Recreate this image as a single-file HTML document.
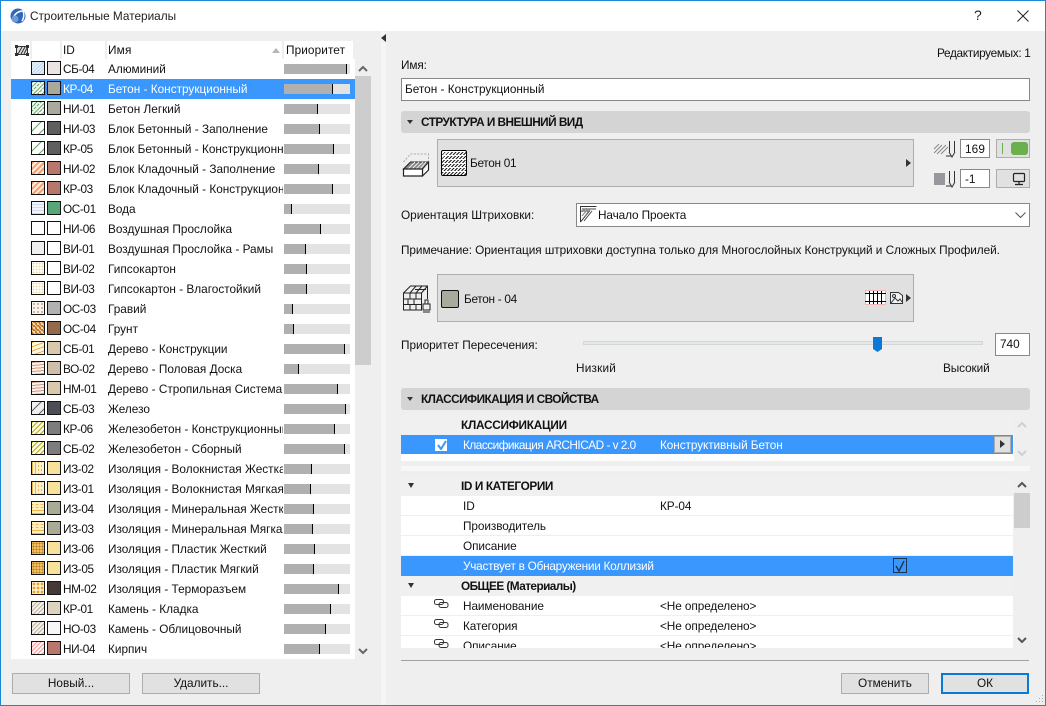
<!DOCTYPE html>
<html lang="ru"><head><meta charset="utf-8"><title>Строительные Материалы</title>
<style>
html,body{margin:0;padding:0;background:#efefef}
#w{position:relative;width:1046px;height:706px;overflow:hidden;background:#efefef;font:11.8px/20px "Liberation Sans",sans-serif;color:#111}
#w div,#w span{position:absolute;box-sizing:border-box;white-space:nowrap}
.bd{left:0;top:0;width:1046px;height:706px;border:1px solid #1a86d8;z-index:9;pointer-events:none}
.r{left:11px;width:344px;height:20px;background:#fff}
.r.s{background:#3a97fe;color:#fff}
.h,.c{top:2px;width:14px;height:14px;border:1px solid #111}
.h{left:20px}.c{left:36px}
.i{left:52px;top:0;letter-spacing:-.4px}
.n{left:97px;top:0;width:175px;overflow:hidden;letter-spacing:0}
.b{left:273px;top:5px;width:66px;height:10px;background:#e3e3e3}
.b span{left:0;top:0;height:10px;background:#b0b0b0;border-right:1px solid #000}
.a{background:repeating-linear-gradient(135deg,#bcd6f5 0 1px,#e6f0fb 1px 2.500px)}
.g{background:radial-gradient(#f2f7f2 30%,transparent 35%) 0 0/3px 3px,repeating-linear-gradient(135deg,#74ad7d 0 1px,#f2f7f2 1px 3px)}
.l{background:repeating-linear-gradient(135deg,#fff 0 6px,#6aa56f 6px 7px)}
.o{background:repeating-linear-gradient(135deg,#f5a070 0 2px,#ffeadb 2px 4px)}
.w{background:repeating-linear-gradient(0deg,#cfdcee 0 1px,#f1f5fb 1px 3px)}
.e{background:#fff}.e2{background:#efefef}
.d{background:radial-gradient(#ecd9a8 35%,#fefcf4 40%) 0 0/3px 3px}
.gr{background:radial-gradient(#cdb7a4 40%,#f8f3ee 45%) 0 0/4px 4px}
.gu{background:radial-gradient(#f3dcba 35%,transparent 40%) 0 0/4px 4px,repeating-linear-gradient(45deg,#c4791f 0 2px,#f3d9b5 2px 3px)}
.t{background:repeating-linear-gradient(160deg,#edb13f 0 1px,#fff6e2 1px 4px)}
.t2{background:repeating-linear-gradient(175deg,#cf9a84 0 1px,#fbf0e9 1px 3px)}
.f{background:repeating-linear-gradient(135deg,#efefef 0 6px,#666 6px 7px)}
.y{background:repeating-linear-gradient(135deg,#b9ab16 0 1px,#fafae0 1px 3.500px)}
.z{background:radial-gradient(#fff4d2 35%,transparent 40%) 0 0/4px 4px,repeating-linear-gradient(90deg,#efb44a 0 1px,#fff0c8 1px 3px)}
.x{background:radial-gradient(#fff0c0 35%,transparent 40%) 0 0/5px 4px,repeating-linear-gradient(0deg,#efb44a 0 1px,#ffeec0 1px 3px)}
.p{background:radial-gradient(#b87c2a 40%,#f0c060 45%) 0 0/3px 3px}
.q{background:radial-gradient(#e8a52e 45%,#fff1cf 50%) 0 0/4px 4px}
.k{background:repeating-linear-gradient(135deg,#bdb4a6 0 1px,#f5f1ea 1px 3px)}
.m{background:repeating-linear-gradient(135deg,#f4a0a0 0 1px,#fff2f2 1px 3px)}
.hd{left:401px;width:629px;height:22px;background:#d4d4d4;border-radius:3px;font-weight:bold;letter-spacing:-.53px;line-height:22px;padding-left:20px}
.tri{width:0;height:0;border-left:4px solid transparent;border-right:4px solid transparent;border-top:5px solid #333}
.ra{width:0;height:0;border-top:4px solid transparent;border-bottom:4px solid transparent;border-left:5px solid #333}
.big{left:437px;width:477px;height:48px;background:#e0e0e0;border:1px solid #adadad}
.inp{background:#fff;border:1px solid #888;line-height:18px;padding-left:4px}
.btn{background:#e1e1e1;border:1px solid #adadad;text-align:center;line-height:19px}
.pr{left:401px;width:612px;height:20px;background:#fff;border-bottom:1px solid #efefef}
.pr .a1{left:62px;top:0;letter-spacing:-.08px}.pr .a2{left:259px;top:0;letter-spacing:-.08px}
.ph{left:401px;width:612px;height:20px;background:#f0f0f0;font-weight:bold;letter-spacing:-.4px}
.ph .a1{left:60px;top:0}
</style></head><body><div id="w">
<div style="left:0;top:0;width:1046px;height:31px;background:#fff"></div>
<svg style="position:absolute;left:10px;top:8px" width="16" height="16" viewBox="0 0 16 16"><circle cx="8" cy="8" r="7.500" fill="#2f68b8"/><path d="M2 13C4 6 8 3 13 3c1.500 3 1 7-1 10" fill="none" stroke="#fff" stroke-width="1.500"/><circle cx="5" cy="11" r="3.500" fill="#6f9bd8"/></svg>
<span style="left:30px;top:6px;letter-spacing:0;color:#222">Строительные Материалы</span>
<span style="left:974px;top:5px;font-size:14px;color:#222">?</span>
<svg style="position:absolute;left:1017px;top:10px" width="12" height="12" viewBox="0 0 12 12"><path d="M.5.5l11 11M11.500.5l-11 11" stroke="#222" stroke-width="1"/></svg>

<!-- left list -->
<div style="left:11px;top:41px;width:344px;height:618px;background:#fff"></div>
<div style="left:30px;top:41px;width:2px;height:18px;background:#eee"></div>
<div style="left:60px;top:41px;width:2px;height:18px;background:#eee"></div>
<div style="left:105px;top:41px;width:2px;height:18px;background:#eee"></div>
<div style="left:282px;top:41px;width:2px;height:18px;background:#eee"></div>
<div style="left:353px;top:41px;width:2px;height:18px;background:#eee"></div>
<svg style="position:absolute;left:15px;top:45px" width="15" height="11" viewBox="0 0 15 11"><rect x="1.500" y="1.500" width="11" height="8" fill="#ddd" stroke="#333"/><path d="M3 9l4-7M6 9l4-7M9 9l3-6" stroke="#333"/><path d="M0 0h3v3H0zM11 0h3v3h-3zM0 8h3v3H0zM11 8h3v3h-3z" fill="#333"/></svg>
<span style="left:63px;top:40px">ID</span>
<span style="left:108px;top:40px;letter-spacing:.2px">Имя</span>
<span style="left:286px;top:40px;letter-spacing:.1px">Приоритет</span>
<div style="left:272px;top:48px;width:0;height:0;border-left:4.500px solid transparent;border-right:4.500px solid transparent;border-bottom:5px solid #b5b5b5"></div>

<div class="r" style="top:59px"><div class="h a"></div><div class="c" style="background:#ece4e2"></div><span class="i">СБ-04</span><span class="n">Алюминий</span><div class="b"><span style="width:63px"></span></div></div>
<div class="r s" style="top:79px"><div class="h g"></div><div class="c" style="background:#a9a99d"></div><span class="i">КР-04</span><span class="n">Бетон - Конструкционный</span><div class="b"><span style="width:49px"></span></div></div>
<div class="r" style="top:99px"><div class="h g"></div><div class="c" style="background:#a9a99d"></div><span class="i">НИ-01</span><span class="n">Бетон Легкий</span><div class="b"><span style="width:34px"></span></div></div>
<div class="r" style="top:119px"><div class="h l"></div><div class="c" style="background:#5f5f5f"></div><span class="i">НИ-03</span><span class="n">Блок Бетонный - Заполнение</span><div class="b"><span style="width:36px"></span></div></div>
<div class="r" style="top:139px"><div class="h l"></div><div class="c" style="background:#5f5f5f"></div><span class="i">КР-05</span><span class="n">Блок Бетонный - Конструкционный</span><div class="b"><span style="width:50px"></span></div></div>
<div class="r" style="top:159px"><div class="h o"></div><div class="c" style="background:#b8776c"></div><span class="i">НИ-02</span><span class="n">Блок Кладочный - Заполнение</span><div class="b"><span style="width:35px"></span></div></div>
<div class="r" style="top:179px"><div class="h o"></div><div class="c" style="background:#b8776c"></div><span class="i">КР-03</span><span class="n">Блок Кладочный - Конструкционный</span><div class="b"><span style="width:49px"></span></div></div>
<div class="r" style="top:199px"><div class="h w"></div><div class="c" style="background:#56a679"></div><span class="i">ОС-01</span><span class="n">Вода</span><div class="b"><span style="width:8px"></span></div></div>
<div class="r" style="top:219px"><div class="h e"></div><div class="c e"></div><span class="i">НИ-06</span><span class="n">Воздушная Прослойка</span><div class="b"><span style="width:37px"></span></div></div>
<div class="r" style="top:239px"><div class="h e2"></div><div class="c e"></div><span class="i">ВИ-01</span><span class="n">Воздушная Прослойка - Рамы</span><div class="b"><span style="width:22px"></span></div></div>
<div class="r" style="top:259px"><div class="h d"></div><div class="c e"></div><span class="i">ВИ-02</span><span class="n">Гипсокартон</span><div class="b"><span style="width:23px"></span></div></div>
<div class="r" style="top:279px"><div class="h d"></div><div class="c e"></div><span class="i">ВИ-03</span><span class="n">Гипсокартон - Влагостойкий</span><div class="b"><span style="width:23px"></span></div></div>
<div class="r" style="top:299px"><div class="h gr"></div><div class="c" style="background:#b2b2b2"></div><span class="i">ОС-03</span><span class="n">Гравий</span><div class="b"><span style="width:9px"></span></div></div>
<div class="r" style="top:319px"><div class="h gu"></div><div class="c" style="background:#946a4c"></div><span class="i">ОС-04</span><span class="n">Грунт</span><div class="b"><span style="width:10px"></span></div></div>
<div class="r" style="top:339px"><div class="h t"></div><div class="c" style="background:#d9c9ac"></div><span class="i">СБ-01</span><span class="n">Дерево - Конструкции</span><div class="b"><span style="width:61px"></span></div></div>
<div class="r" style="top:359px"><div class="h t2"></div><div class="c" style="background:#cdbfa9"></div><span class="i">ВО-02</span><span class="n">Дерево - Половая Доска</span><div class="b"><span style="width:15px"></span></div></div>
<div class="r" style="top:379px"><div class="h t2"></div><div class="c" style="background:#d9c9ac"></div><span class="i">НМ-01</span><span class="n">Дерево - Стропильная Система</span><div class="b"><span style="width:54px"></span></div></div>
<div class="r" style="top:399px"><div class="h f"></div><div class="c" style="background:#4d4f57"></div><span class="i">СБ-03</span><span class="n">Железо</span><div class="b"><span style="width:62px"></span></div></div>
<div class="r" style="top:419px"><div class="h y"></div><div class="c" style="background:#7d7d7d"></div><span class="i">КР-06</span><span class="n">Железобетон - Конструкционный</span><div class="b"><span style="width:51px"></span></div></div>
<div class="r" style="top:439px"><div class="h y"></div><div class="c" style="background:#7d7d7d"></div><span class="i">СБ-02</span><span class="n">Железобетон - Сборный</span><div class="b"><span style="width:61px"></span></div></div>
<div class="r" style="top:459px"><div class="h z"></div><div class="c" style="background:#f7e29c"></div><span class="i">ИЗ-02</span><span class="n">Изоляция - Волокнистая Жесткая</span><div class="b"><span style="width:28px"></span></div></div>
<div class="r" style="top:479px"><div class="h z"></div><div class="c" style="background:#f7e29c"></div><span class="i">ИЗ-01</span><span class="n">Изоляция - Волокнистая Мягкая</span><div class="b"><span style="width:27px"></span></div></div>
<div class="r" style="top:499px"><div class="h x"></div><div class="c" style="background:#a9ab97"></div><span class="i">ИЗ-04</span><span class="n">Изоляция - Минеральная Жесткая</span><div class="b"><span style="width:30px"></span></div></div>
<div class="r" style="top:519px"><div class="h x"></div><div class="c" style="background:#a9ab97"></div><span class="i">ИЗ-03</span><span class="n">Изоляция - Минеральная Мягкая</span><div class="b"><span style="width:29px"></span></div></div>
<div class="r" style="top:539px"><div class="h p"></div><div class="c" style="background:#f7e29c"></div><span class="i">ИЗ-06</span><span class="n">Изоляция - Пластик Жесткий</span><div class="b"><span style="width:31px"></span></div></div>
<div class="r" style="top:559px"><div class="h p"></div><div class="c" style="background:#f7e29c"></div><span class="i">ИЗ-05</span><span class="n">Изоляция - Пластик Мягкий</span><div class="b"><span style="width:30px"></span></div></div>
<div class="r" style="top:579px"><div class="h q"></div><div class="c" style="background:#453a35"></div><span class="i">НМ-02</span><span class="n">Изоляция - Терморазъем</span><div class="b"><span style="width:55px"></span></div></div>
<div class="r" style="top:599px"><div class="h k"></div><div class="c" style="background:#ddd4c0"></div><span class="i">КР-01</span><span class="n">Камень - Кладка</span><div class="b"><span style="width:47px"></span></div></div>
<div class="r" style="top:619px"><div class="h k"></div><div class="c" style="background:#f7f7f7"></div><span class="i">НО-03</span><span class="n">Камень - Облицовочный</span><div class="b"><span style="width:42px"></span></div></div>
<div class="r" style="top:639px"><div class="h m"></div><div class="c" style="background:#b8776c"></div><span class="i">НИ-04</span><span class="n">Кирпич</span><div class="b"><span style="width:36px"></span></div></div>

<div style="left:355px;top:76px;width:16px;height:289px;background:#cdcdcd"></div>
<svg style="position:absolute;left:358px;top:65px" width="10" height="7"><path d="M1 6l4-4 4 4" fill="none" stroke="#666" stroke-width="2"/></svg>
<svg style="position:absolute;left:358px;top:648px" width="10" height="7"><path d="M1 1l4 4 4-4" fill="none" stroke="#666" stroke-width="2"/></svg>
<div class="btn" style="left:12px;top:673px;width:118px;height:21px">Новый...</div>
<div class="btn" style="left:142px;top:673px;width:118px;height:21px">Удалить...</div>
<div style="left:381px;top:31px;width:5px;height:674px;background:#f5f5f5"></div>
<div style="left:381px;top:34px;width:0;height:0;border-top:4px solid transparent;border-bottom:4px solid transparent;border-right:5px solid #333"></div>

<!-- right -->
<span style="left:937px;top:43px;letter-spacing:-.33px">Редактируемых: 1</span>
<span style="left:401px;top:55px;letter-spacing:-.1px">Имя:</span>
<div class="inp" style="left:401px;top:78px;width:629px;height:23px;line-height:21px;padding-left:3px;letter-spacing:0">Бетон - Конструкционный</div>
<div class="hd" style="top:111px"><div class="tri" style="left:6px;top:9px;border-left-width:3.500px;border-right-width:3.500px;border-top-width:4px"></div>СТРУКТУРА И ВНЕШНИЙ ВИД</div>

<svg style="position:absolute;left:402px;top:151px" width="29" height="28" viewBox="0 0 29 28"><path d="M1.500 11l7-8h18v8l-6 7" fill="none" stroke="#aaa" stroke-dasharray="2 1.500"/><path d="M1.500 18l7-7h18l-6 7z" fill="#888" stroke="#222"/><path d="M6 18l7-7M10 18l7-7M14 18l7-7M18 18l6-7" stroke="#eee"/><path d="M1.500 18h19v7h-19zM20.500 25l6-6v-8" fill="#fff" stroke="#222" stroke-width="1.200"/></svg>
<div class="big" style="top:139px"><div style="left:3px;top:10px;width:26px;height:26px;border:1px solid #000;border-radius:2px;background:repeating-linear-gradient(0deg,transparent 0 3px,#fff 3px 4px),repeating-linear-gradient(135deg,#222 0 1px,#fff 1px 2.500px)"></div><span style="left:32px;top:13px;letter-spacing:-.3px">Бетон 01</span><div class="ra" style="left:468px;top:19px"></div></div>

<svg style="position:absolute;left:933px;top:140px" width="26" height="18" viewBox="0 0 26 18"><path d="M1 13l8-8M4 14l9-9M8 14l7-7M1 9l5-5" stroke="#888"/><path d="M16.500 1v11M21.500 1v11M16 12l3 5 3-5" fill="none" stroke="#333"/><path d="M13 16h5" stroke="#333"/></svg>
<div class="inp" style="left:960px;top:139px;width:30px;height:19px;letter-spacing:.1px">169</div>
<div class="btn" style="left:996px;top:139px;width:34px;height:19px"><div style="left:5px;top:3px;width:1px;height:11px;background:#6ab04f"></div><div style="left:14px;top:2px;width:17px;height:13px;background:#6ab04f;border-radius:3px"></div></div>
<svg style="position:absolute;left:933px;top:170px" width="26" height="18" viewBox="0 0 26 18"><rect x="1" y="3" width="11" height="12" fill="#97989b"/><path d="M16.500 1v11M21.500 1v11M16 12l3 5 3-5" fill="none" stroke="#333"/><path d="M13 16h5" stroke="#333"/></svg>
<div class="inp" style="left:960px;top:169px;width:30px;height:19px">-1</div>
<div class="btn" style="left:996px;top:169px;width:34px;height:19px"><svg style="position:absolute;left:15px;top:2px" width="15" height="14" viewBox="0 0 15 14"><rect x="1.500" y="1.500" width="11" height="8" rx="1" fill="none" stroke="#222" stroke-width="1.200"/><path d="M7 10v2M3 12.500h8" stroke="#222" stroke-width="1.200"/></svg></div>

<span style="left:401px;top:205px;letter-spacing:0">Ориентация Штриховки:</span>
<div class="inp" style="left:576px;top:203px;width:454px;height:24px;line-height:22px;padding-left:21px;letter-spacing:-.1px">Начало Проекта
<svg style="position:absolute;left:3px;top:2px" width="17" height="17" viewBox="0 0 17 17"><path d="M.5 16V.5h16" fill="none" stroke="#333"/><path d="M.5 5h9L.5 16M4 15l8-10M2 3h14" fill="none" stroke="#444"/><path d="M2 10l6-7M2 6l4-4M5 10l5-7" stroke="#888"/></svg>
<svg style="position:absolute;left:438px;top:8px" width="11" height="7"><path d="M.5.5l5 5 5-5" fill="none" stroke="#555"/></svg></div>
<span style="left:401px;top:240px;letter-spacing:-.055px">Примечание: Ориентация штриховки доступна только для Многослойных Конструкций и Сложных Профилей.</span>

<svg style="position:absolute;left:402px;top:284px" width="30" height="30" viewBox="0 0 30 30"><path d="M1.500 9l7-7h17v13M1.500 9h18v17h-18zM19.500 9l6-7M1.500 15h18M1.500 20.500h18M8 9v6M14 9v6M6 15v5.500M12 15v5.500M8 20.500V26M14 20.500V26M13 5.500h11M14 2l-6 7M20 2l-6 7" fill="none" stroke="#222"/><path d="M21 20h7v6h-7zM23 20v-4h3v4" fill="#eee" stroke="#222"/><path d="M21 26h7v3h-7z" fill="#888"/></svg>
<div class="big" style="top:274px"><div style="left:3px;top:15px;width:18px;height:18px;background:#a9a99d;border:1px solid #111;border-radius:2px"></div><span style="left:26px;top:14px;letter-spacing:-.3px">Бетон - 04</span>
<svg style="position:absolute;left:427px;top:15px" width="22" height="16" viewBox="0 0 22 16"><rect x=".5" y=".5" width="20" height="14" fill="#fff" stroke="#f2b5b5"/><path d="M0 3.500h21M0 11.500h21M4.500 1v13M8.500 1v13M12.500 1v13M16.500 1v13" stroke="#000"/></svg>
<svg style="position:absolute;left:451px;top:15px" width="15" height="15" viewBox="0 0 15 15"><path d="M1.500 2.500h8l4 3v8h-12z" fill="#f2f2f2" stroke="#333"/><path d="M2 13l4-5 3 3 2-2 2 3" fill="none" stroke="#333"/><circle cx="5" cy="6" r="1.500" fill="none" stroke="#333"/></svg>
<div class="ra" style="left:468px;top:19px"></div></div>

<span style="left:401px;top:335px;letter-spacing:-.02px">Приоритет Пересечения:</span>
<div style="left:583px;top:341px;width:400px;height:4px;background:#e5e8e8;border:1px solid #d4d7d7"></div>
<svg style="position:absolute;left:873px;top:336px" width="9" height="17" viewBox="0 0 9 17"><path d="M0 1h9v12l-4.500 3L0 13z" fill="#0a78d7"/></svg>
<div class="inp" style="left:995px;top:333px;width:35px;height:23px;line-height:21px">740</div>
<span style="left:576px;top:358px;letter-spacing:.2px">Низкий</span>
<span style="left:943px;top:358px;letter-spacing:-.1px">Высокий</span>

<div class="hd" style="top:388px"><div class="tri" style="left:6px;top:9px;border-left-width:3.500px;border-right-width:3.500px;border-top-width:4px"></div>КЛАССИФИКАЦИЯ И СВОЙСТВА</div>
<div style="left:401px;top:415px;width:613px;height:46px;background:#fff"></div>
<div class="ph" style="top:415px;width:613px;letter-spacing:-.25px"><span class="a1">КЛАССИФИКАЦИИ</span></div>
<div style="left:401px;top:435px;width:612px;height:19px;background:#3a97fe;color:#fff;line-height:20px">
<div style="left:34px;top:4px;width:12px;height:12px;border:1px solid #fff;background:#fff"><svg style="position:absolute;left:1px;top:0" width="10" height="10"><path d="M1 5l3 4 5-8" fill="none" stroke="#3a97fe" stroke-width="2"/></svg></div>
<span style="left:62px;top:0;letter-spacing:-.5px">Классификация ARCHICAD - v 2.0</span><span style="left:259px;top:0;letter-spacing:-.08px">Конструктивный Бетон</span>
<div style="left:593px;top:1px;width:17px;height:17px;background:#e1e1e1;border:1px solid #adadad"><div class="ra" style="left:5px;top:3px"></div></div></div>
<svg style="position:absolute;left:1017px;top:421px" width="10" height="7"><path d="M1 6l4-4 4 4" fill="none" stroke="#d0d0d0" stroke-width="2"/></svg>
<svg style="position:absolute;left:1017px;top:450px" width="10" height="7"><path d="M1 1l4 4 4-4" fill="none" stroke="#d0d0d0" stroke-width="2"/></svg>
<div style="left:401px;top:466px;width:629px;height:5px;background:#f7f7f7"></div>

<div style="left:401px;top:476px;width:612px;height:172px;overflow:hidden;background:#fff">
<div class="ph" style="left:0;top:0"><div class="tri" style="left:7px;top:7px;border-left-width:3.500px;border-right-width:3.500px"></div><span class="a1">ID И КАТЕГОРИИ</span></div>
<div class="pr" style="left:0;top:20px"><span class="a1">ID</span><span class="a2">КР-04</span></div>
<div class="pr" style="left:0;top:40px"><span class="a1">Производитель</span></div>
<div class="pr" style="left:0;top:60px"><span class="a1">Описание</span></div>
<div class="pr" style="left:0;top:80px;background:#3a97fe;color:#fff;border:0"><span class="a1" style="letter-spacing:-.25px">Участвует в Обнаружении Коллизий</span>
<div style="left:492px;top:2px;width:14px;height:15px;border:1px solid #1d3550"><svg style="position:absolute;left:1px;top:1px" width="10" height="12"><path d="M1 6l3 5 5-10" fill="none" stroke="#1d3550" stroke-width="1.400"/></svg></div></div>
<div class="ph" style="left:0;top:100px;letter-spacing:-.55px"><div class="tri" style="left:7px;top:7px;border-left-width:3.500px;border-right-width:3.500px"></div><span class="a1">ОБЩЕЕ (Материалы)</span></div>
<div class="pr" style="left:0;top:120px"><svg style="position:absolute;left:33px;top:3px" width="15" height="10" viewBox="0 0 15 10"><rect x=".5" y=".5" width="9" height="5" rx="2" fill="none" stroke="#333"/><rect x="5" y="3.500" width="9" height="5" rx="2" fill="none" stroke="#333"/></svg><span class="a1">Наименование</span><span class="a2">&lt;Не определено&gt;</span></div>
<div class="pr" style="left:0;top:140px"><svg style="position:absolute;left:33px;top:3px" width="15" height="10" viewBox="0 0 15 10"><rect x=".5" y=".5" width="9" height="5" rx="2" fill="none" stroke="#333"/><rect x="5" y="3.500" width="9" height="5" rx="2" fill="none" stroke="#333"/></svg><span class="a1">Категория</span><span class="a2">&lt;Не определено&gt;</span></div>
<div class="pr" style="left:0;top:160px"><svg style="position:absolute;left:33px;top:3px" width="15" height="10" viewBox="0 0 15 10"><rect x=".5" y=".5" width="9" height="5" rx="2" fill="none" stroke="#333"/><rect x="5" y="3.500" width="9" height="5" rx="2" fill="none" stroke="#333"/></svg><span class="a1">Описание</span><span class="a2">&lt;Не определено&gt;</span></div>
</div>
<div style="left:1014px;top:493px;width:16px;height:35px;background:#cdcdcd"></div>
<svg style="position:absolute;left:1017px;top:481px" width="10" height="7"><path d="M1 6l4-4 4 4" fill="none" stroke="#555" stroke-width="2"/></svg>
<svg style="position:absolute;left:1017px;top:637px" width="10" height="7"><path d="M1 1l4 4 4-4" fill="none" stroke="#555" stroke-width="2"/></svg>
<div style="left:401px;top:660px;width:628px;height:1px;background:#a0a0a0"></div>
<div class="btn" style="left:841px;top:673px;width:88px;height:21px">Отменить</div>
<div class="btn" style="left:941px;top:673px;width:88px;height:21px;border:2px solid #0a78d7;line-height:17px">ОК</div>
<svg style="position:absolute;left:1034px;top:694px" width="10" height="10"><path d="M8 1h1v1H8zM5 4h1v1H5zM8 4h1v1H8zM2 7h1v1H2zM5 7h1v1H5zM8 7h1v1H8z" fill="#aaa"/></svg>
<div class="bd"></div>
</div></body></html>
